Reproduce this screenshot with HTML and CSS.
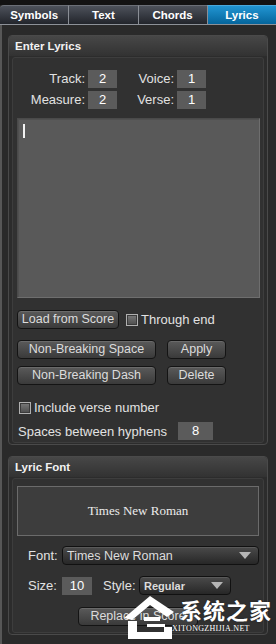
FILE: index.html
```html
<!DOCTYPE html>
<html>
<head>
<meta charset="utf-8">
<link rel="stylesheet" href="styles.css">
</head>
<body>
<div class="topbar"></div>
<div class="tabs">
  <div class="tab first">Symbols</div>
  <div class="tab">Text</div>
  <div class="tab">Chords</div>
  <div class="tab active">Lyrics</div>
</div>
<div class="main">
  <section class="panel p1">
    <div class="panel-head">Enter Lyrics</div>
    <div class="panel-body b1">
      <div class="grid">
        <span class="lbl">Track:</span><span class="num">2</span>
        <span class="lbl">Voice:</span><span class="num">1</span>
        <span class="lbl">Measure:</span><span class="num">2</span>
        <span class="lbl">Verse:</span><span class="num">1</span>
      </div>
      <div class="textarea"><span class="caret"></span></div>
      <div class="row r-load">
        <div class="btn w-load">Load from Score</div>
        <span class="check"></span><span class="txt">Through end</span>
      </div>
      <div class="row r-nbs">
        <div class="btn w-nb">Non-Breaking Space</div>
        <div class="btn w-sm">Apply</div>
      </div>
      <div class="row r-nbd">
        <div class="btn w-nb">Non-Breaking Dash</div>
        <div class="btn w-sm">Delete</div>
      </div>
      <div class="row r-inc">
        <span class="check"></span><span class="txt">Include verse number</span>
      </div>
      <div class="row r-sp">
        <span class="txt sp-lbl">Spaces between hyphens</span><span class="num sp-num">8</span>
      </div>
    </div>
  </section>
  <section class="panel p2">
    <div class="panel-head">Lyric Font</div>
    <div class="panel-body b2">
      <div class="preview">Times New Roman</div>
      <div class="row r-font">
        <span class="txt flbl">Font:</span>
        <div class="select s-font"><span>Times New Roman</span><i class="tri"></i></div>
      </div>
      <div class="row r-size">
        <span class="txt flbl">Size:</span><span class="num sz">10</span>
        <span class="txt stlbl">Style:</span>
        <div class="select s-style"><span class="bold">Regular</span><i class="tri"></i></div>
      </div>
      <div class="row r-rep">
        <div class="btn w-rep">Replace in Score</div>
      </div>
    </div>
  </section>
  <div class="watermark">
    <svg class="wm-logo" width="58" height="50" viewBox="0 0 58 50">
      <path d="M4 28 L30 6 L54 22 L47 27 L30 15 L12 30 Z" fill="#fff"/>
      <path d="M8 31 L17 31 L17 42 L44 42 L44 37 L52 37 L52 49 L8 49 Z" fill="#fff"/>
      <path d="M24 27 L40 27 L40 31 L24 31 Z M27 34 L45 34 L45 37 L27 37 Z" fill="#fff"/>
    </svg>
    <div class="wm-text">
      <div class="wm-cn">系统之家</div>
      <div class="wm-en">XITONGZHIJIA.NET</div>
    </div>
  </div>
</div>
</body>
</html>
```
FILE: styles.css
```css
* { box-sizing: border-box; }
html, body { margin: 0; padding: 0; }
body {
  width: 276px;
  height: 644px;
  overflow: hidden;
  background: #2a2a2a;
  font-family: "Liberation Sans", Arial, sans-serif;
  color: #e2e2e2;
  position: relative;
}
.topbar { height: 5px; background: #131313; }
.tabs {
  display: flex;
  height: 20px;
  border-bottom: 1px solid #8d9198;
}
.tab {
  flex: 1;
  text-align: center;
  font-weight: bold;
  font-size: 11.5px;
  line-height: 18px;
  color: #fff;
  background: linear-gradient(#4d525b, #22252b);
  border-top: 1px solid #6b6f77;
  border-left: 1px solid #8a8e95;
}
.tab.first { border-left: none; border-top-left-radius: 4px; }
.tab.active {
  background: linear-gradient(#2195d2, #05659c);
  border-top-color: #4aa9dc;
}
.main {
  border-left: 2px solid #575757;
  height: 619px;
  padding-top: 10px;
  position: relative;
}
.panel {
  margin: 0 8px 0 6px;
  border: 1px solid #4a4a4a;
  border-radius: 4px;
  background: #2c2c2c;
  padding: 0 3px 1px;
}
.p2 { margin-top: 11px; }
.panel-head {
  margin: 0 -3px;
  height: 20px;
  line-height: 20px;
  padding-left: 6px;
  font-weight: bold;
  font-size: 11.5px;
  color: #f2f2f2;
  background: linear-gradient(#474747, #323232);
  border-radius: 3px 3px 0 0;
}
.panel-body {
  margin-top: 1px;
  border: 1px solid #3d3d3d;
  border-radius: 3px;
  background: #313131;
  display: flex;
  flex-direction: column;
}
.b1 { height: 386px; padding-top: 12px; }
.b2 { height: 155px; padding-top: 7px; }
.grid {
  display: grid;
  grid-template-columns: 75px 29px 60px 29px;
  grid-auto-rows: 18px;
  row-gap: 3px;
  font-size: 13px;
}
.lbl { text-align: right; padding-right: 3px; line-height: 18px; }
.num {
  background: #5b5b5b;
  color: #fff;
  text-align: center;
  font-size: 13px;
  line-height: 18px;
  height: 18px;
}
.textarea {
  margin: 9px 0 0 4px;
  width: 243px;
  height: 180px;
  background: #595959;
  border: 1px solid #6e6e6e;
  border-top-color: #4a4a4a;
  border-left-color: #4a4a4a;
  box-shadow: inset 1px 1px 0 #505050;
  position: relative;
  padding: 5px 0 0 5px;
}
.caret { display: block; width: 2px; height: 14px; background: #f2f2f2; }
.row { display: flex; align-items: center; margin-left: 4px; }
.txt { font-size: 13px; color: #e2e2e2; }
.btn {
  height: 19px;
  border: 1px solid #141414;
  border-radius: 4px;
  background: linear-gradient(#5a5a5a, #3a3a3a);
  box-shadow: inset 0 1px 0 #6a6a6a;
  color: #dcdcdc;
  font-size: 12.5px;
  line-height: 17px;
  text-align: center;
  white-space: nowrap;
}
.w-load { width: 102px; }
.w-nb { width: 139px; }
.w-sm { width: 59px; margin-left: 11px; }
.w-rep { width: 120px; }
.check {
  width: 12px;
  height: 12px;
  border: 1px solid #b0b0b0;
  background: linear-gradient(#7a7a7a, #4c4c4c);
  box-shadow: inset 0 0 0 1px #3a3a3a;
  margin-right: 3px;
}
.r-load { margin-top: 12px; }
.r-load .check { margin-left: 7px; }
.r-nbs { margin-top: 11px; }
.r-nbd { margin-top: 7px; }
.r-inc { margin-top: 16px; margin-left: 6px; height: 13px; }
.r-sp { margin-top: 8px; margin-left: 5px; }
.sp-lbl { width: 160px; }
.sp-num { width: 35px; }
.preview {
  margin-left: 4px;
  width: 242px;
  height: 50px;
  background: #3d3d3d;
  border: 1px solid #6b6b6b;
  font-family: "Liberation Serif", "Times New Roman", serif;
  font-size: 13px;
  color: #ececec;
  text-align: center;
  line-height: 48px;
}
.r-font { margin-top: 10px; margin-left: 15px; }
.flbl { width: 34px; }
.select {
  height: 19px;
  border: 1px solid #111;
  border-radius: 4px;
  background: linear-gradient(#4a4a4a, #272727);
  box-shadow: inset 0 1px 0 #5a5a5a;
  color: #dcdcdc;
  font-size: 12.5px;
  display: flex;
  align-items: center;
  justify-content: space-between;
  padding: 0 7px 0 4px;
}
.s-font { width: 197px; }
.s-style { width: 92px; }
.bold { font-weight: bold; font-size: 11px; }
.tri {
  width: 0; height: 0;
  border-left: 6px solid transparent;
  border-right: 6px solid transparent;
  border-top: 7px solid #b5b5b5;
}
.r-size { margin-top: 11px; margin-left: 15px; }
.sz { width: 30px; }
.stlbl { margin-left: 11px; width: 36px; }
.r-rep { margin-top: 12px; margin-left: 0; justify-content: center; }
.watermark {
  position: absolute;
  left: 118px;
  top: 565px;
  display: flex;
  align-items: flex-start;
  pointer-events: none;
}
.wm-text { margin-left: 2px; margin-top: 4px; }
.wm-cn {
  font-family: "Noto Sans CJK SC", sans-serif;
  font-weight: bold;
  font-size: 22px;
  line-height: 30px;
  color: #fff;
  text-shadow: 0 0 2px #222;
  letter-spacing: 1px;
}
.wm-en {
  font-family: "Liberation Serif", serif;
  font-size: 8px;
  line-height: 10px;
  color: #fff;
  margin-left: -8px;
  letter-spacing: 0.3px;
}
```
